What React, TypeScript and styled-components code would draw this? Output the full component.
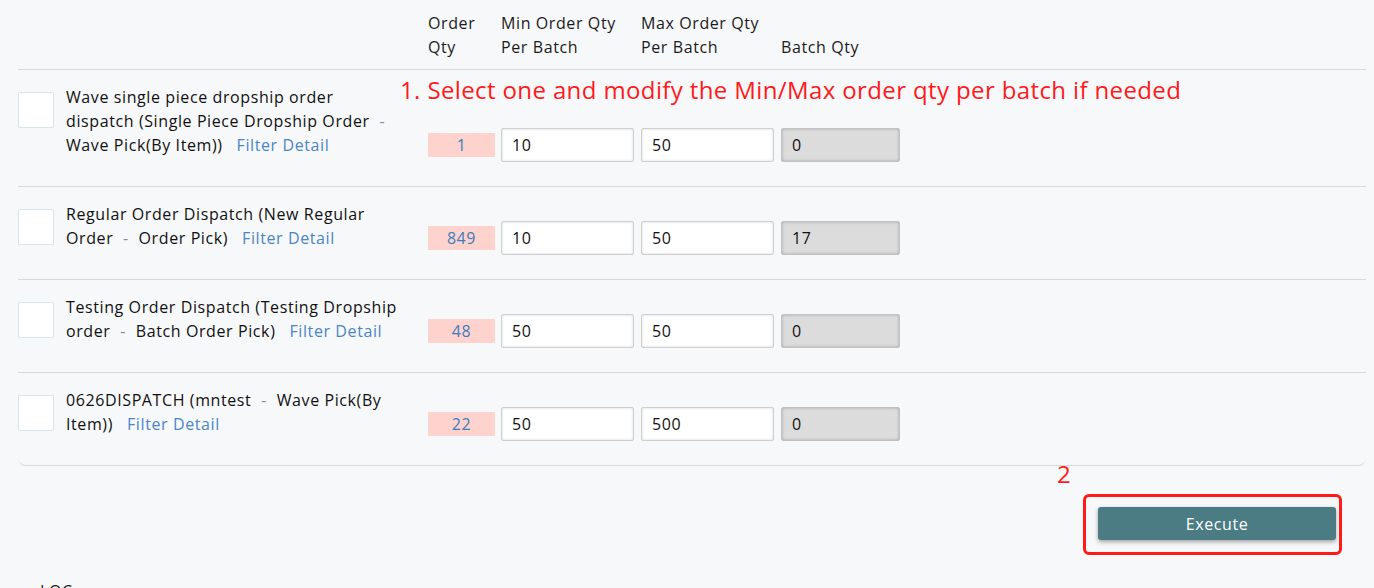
import styled, { createGlobalStyle } from 'styled-components';

const GlobalStyle = createGlobalStyle`
  html, body {
    margin: 0;
    padding: 0;
    background: #f7f8fa;
    font-family: 'Open Sans', 'Noto Sans', sans-serif;
    color: #1b1b1b;
    overflow: hidden;
  }
`;

interface DispatchRule {
  name: string;
  detail: string;
  pick: string;
  orderQty: number;
  min: number;
  max: number;
  batch: number;
}

const rules: DispatchRule[] = [
  {
    name: 'Wave single piece dropship order dispatch',
    detail: 'Single Piece Dropship Order',
    pick: 'Wave Pick(By Item)',
    orderQty: 1,
    min: 10,
    max: 50,
    batch: 0,
  },
  {
    name: 'Regular Order Dispatch',
    detail: 'New Regular Order',
    pick: 'Order Pick',
    orderQty: 849,
    min: 10,
    max: 50,
    batch: 17,
  },
  {
    name: 'Testing Order Dispatch',
    detail: 'Testing Dropship order',
    pick: 'Batch Order Pick',
    orderQty: 48,
    min: 50,
    max: 50,
    batch: 0,
  },
  {
    name: '0626DISPATCH',
    detail: 'mntest',
    pick: 'Wave Pick(By Item)',
    orderQty: 22,
    min: 50,
    max: 500,
    batch: 0,
  },
];

const App = () => {
  return (
    <>
      <GlobalStyle />
      <Page>
        <List>
          <HeaderRow>
            <NameHead />
            <QtyCell>
              <HeadText>
                Order
                <br />
                Qty
              </HeadText>
            </QtyCell>
            <InputCell>
              <HeadText>
                Min Order Qty
                <br />
                Per Batch
              </HeadText>
            </InputCell>
            <InputCell>
              <HeadText>
                Max Order Qty
                <br />
                Per Batch
              </HeadText>
            </InputCell>
            <BatchCell>
              <HeadText>Batch Qty</HeadText>
            </BatchCell>
          </HeaderRow>

          {rules.map((rule) => (
            <RuleRow key={rule.name}>
              <CheckBox type="checkbox" />
              <RuleName>
                {rule.name} ({rule.detail} <Dash>-</Dash> {rule.pick})
                <FilterLink>Filter Detail</FilterLink>
              </RuleName>
              <QtyCell>
                <QtyBadge>{rule.orderQty}</QtyBadge>
              </QtyCell>
              <InputCell>
                <QtyInput defaultValue={rule.min} />
              </InputCell>
              <InputCell>
                <QtyInput defaultValue={rule.max} />
              </InputCell>
              <BatchCell>
                <QtyInput defaultValue={rule.batch} disabled />
              </BatchCell>
            </RuleRow>
          ))}

          <StepNote>1. Select one and modify the Min/Max order qty per batch if needed</StepNote>
        </List>

        <Footer>
          <ButtonWrap>
            <StepNumber>2</StepNumber>
            <ExecuteButton>Execute</ExecuteButton>
          </ButtonWrap>
        </Footer>

        <LocLabel>LOC</LocLabel>
      </Page>
    </>
  );
};

const Page = styled.div({
  padding: '0 8px 0 18px',
  fontSize: '16px',
  letterSpacing: '0.6px',
});

const List = styled.div({
  position: 'relative',
  borderBottom: '1px solid #d9d9d9',
  borderRadius: '0 0 8px 8px',
});

const HeaderRow = styled.div({
  display: 'flex',
  alignItems: 'flex-end',
  padding: '11px 0 10px',
  lineHeight: '24px',
});

const NameHead = styled.div({
  width: '410px',
});

const HeadText = styled.div({
  whiteSpace: 'nowrap',
  color: '#1b1b1b',
});

const RuleRow = styled.div({
  display: 'flex',
  alignItems: 'flex-end',
  padding: '15px 0 24px',
  borderTop: '1px solid #d9d9d9',
  lineHeight: '24px',
});

const CheckBox = styled.input({
  appearance: 'none',
  alignSelf: 'flex-start',
  width: '36px',
  height: '36px',
  margin: '7px 12px 0 0',
  background: '#ffffff',
  border: '1px solid #d6e6e9',
  borderRadius: '1px',
  flexShrink: 0,
});

const RuleName = styled.div({
  width: '340px',
  marginRight: '22px',
  paddingBottom: '5px',
  whiteSpace: 'pre-wrap',
  color: '#111',
});

const Dash = styled.span({
  color: '#8a8a8a',
  margin: '0 5px',
});

const FilterLink = styled.a({
  color: '#4a86c5',
  marginLeft: '14px',
  cursor: 'pointer',
});

const QtyCell = styled.div({
  width: '67px',
  marginRight: '6px',
  flexShrink: 0,
});

const InputCell = styled.div({
  width: '133px',
  marginRight: '7px',
  flexShrink: 0,
});

const BatchCell = styled.div({
  width: '119px',
  flexShrink: 0,
});

const QtyBadge = styled.div({
  height: '24px',
  marginBottom: '5px',
  background: '#ffd3cd',
  color: '#3d7dbd',
  textAlign: 'center',
  lineHeight: '24px',
});

const QtyInput = styled.input({
  boxSizing: 'border-box',
  width: '100%',
  height: '34px',
  padding: '0 10px',
  border: '1px solid #cfcfcf',
  borderRadius: '2px',
  background: '#ffffff',
  boxShadow: 'inset 0 0 3px rgba(0, 0, 0, 0.15)',
  fontFamily: 'inherit',
  fontSize: '16px',
  letterSpacing: '0.6px',
  color: '#111',
  outline: 'none',
  '&:disabled': {
    background: '#dcdcdc',
    borderColor: '#c2c2c2',
    color: '#111',
    boxShadow: 'inset 0 0 3px rgba(0, 0, 0, 0.25)',
  },
});

const StepNote = styled.div({
  position: 'absolute',
  left: '382px',
  top: '74px',
  color: '#ff1a1a',
  fontSize: '24px',
  letterSpacing: '0.38px',
  lineHeight: '32px',
  whiteSpace: 'nowrap',
});

const Footer = styled.div({
  display: 'flex',
  alignItems: 'flex-start',
  justifyContent: 'flex-end',
  boxSizing: 'border-box',
  padding: '41px 30px 0 0',
  height: '115px',
});

const ButtonWrap = styled.div({
  position: 'relative',
  '&::after': {
    content: '""',
    position: 'absolute',
    left: '-15px',
    right: '-6px',
    top: '-13px',
    bottom: '-15px',
    border: '3px solid #ff1a1a',
    borderRadius: '6px',
    pointerEvents: 'none',
  },
});

const StepNumber = styled.div({
  position: 'absolute',
  left: '-41px',
  top: '-48px',
  color: '#ff1a1a',
  fontSize: '24px',
  lineHeight: '30px',
});

const ExecuteButton = styled.button({
  display: 'block',
  width: '238px',
  height: '33px',
  border: 'none',
  borderRadius: '3px',
  background: '#4b7c84',
  color: '#ffffff',
  fontFamily: 'inherit',
  fontSize: '16px',
  letterSpacing: '0.6px',
  boxShadow: '0 2px 4px rgba(0, 0, 0, 0.35)',
  cursor: 'pointer',
});

const LocLabel = styled.div({
  paddingLeft: '22px',
  fontSize: '16px',
  lineHeight: '20px',
});

export default App;
